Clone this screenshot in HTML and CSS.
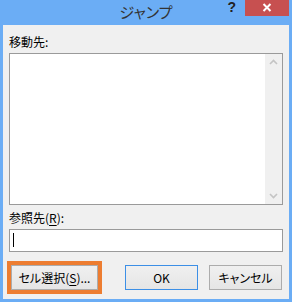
FILE: index.html
```html
<!DOCTYPE html>
<html lang="ja">
<head>
  <meta charset="UTF-8">
  <title>ジャンプ</title>
  <link rel="stylesheet" href="styles.css">
</head>
<body>
  <div class="window">
    <div class="titlebar">
      <div></div>
      <div class="title">ジャンプ</div>
      <div class="controls">
        <span class="help">?</span>
        <span class="close">
          <svg width="10" height="9" viewBox="0 0 10 9"><path d="M1.5 1 L8.5 8 M8.5 1 L1.5 8" stroke="#fff" stroke-width="2"/></svg>
        </span>
      </div>
    </div>
    <div class="panel">
      <div class="label">移動先:</div>
      <div class="listbox">
        <div class="scrollbar">
          <svg class="arrow" width="17" height="17" viewBox="0 0 17 17"><polyline points="5,10 8.5,6.5 12,10" fill="none" stroke="#c4c4c4" stroke-width="1.6"/></svg>
          <svg class="arrow" width="17" height="17" viewBox="0 0 17 17"><polyline points="5,7 8.5,10.5 12,7" fill="none" stroke="#c4c4c4" stroke-width="1.6"/></svg>
        </div>
      </div>
      <div class="label label-ref">参照先(<u>R</u>):</div>
      <div class="input"><i class="caret"></i></div>
      <div class="buttons">
        <button class="btn btn-cell">セル選択(<u>S</u>)...</button>
        <button class="btn btn-ok">OK</button>
        <button class="btn btn-cancel">キャンセル</button>
      </div>
    </div>
  </div>
</body>
</html>
```

FILE: styles.css
```css
html,body,div,span,button{margin:0;padding:0;}
body{
  width: 292px;
  height: 302px;
  overflow: hidden;
  font-family: "Noto Sans CJK JP", "Noto Sans", sans-serif;
  font-size: 12px;
  font-feature-settings: "palt";
  color: #000;
}
.window{
  width: 292px;
  height: 302px;
  background: #6badf5;
  display: flex;
  flex-direction: column;
}
.titlebar{
  height: 25px;
  flex: none;
  display: grid;
  grid-template-columns: 1fr auto 1fr;
}
.title{
  font-size: 15px;
  line-height: 24px;
  color: #333;
}
.controls{
  justify-self: end;
  display: flex;
  align-items: flex-start;
}
.help{
  font-family: "Liberation Sans", sans-serif;
  font-weight: bold;
  font-size: 14px;
  line-height: 15px;
  color: #222;
  margin-right: 9px;
}
.close{
  width: 44px;
  height: 16px;
  margin-right: 3px;
  background: #c75050;
  display: flex;
  justify-content: center;
  align-items: center;
}
.close svg{
  margin-top: -2px;
}
.panel{
  flex: 1;
  margin: 0 3px 3px;
  padding: 0 6px;
  background: #f0f0f0;
  display: flex;
  flex-direction: column;
}
.label{
  line-height: 20px;
  padding: 7px 0 1px;
}
.label-ref{
  padding: 3px 0 1px;
}
.label u{
  text-decoration-thickness: 1px;
  text-underline-offset: 2px;
}
.listbox{
  height: 152px;
  box-sizing: border-box;
  border: 1px solid #9a9a9a;
  background: #fff;
  display: flex;
  justify-content: flex-end;
}
.scrollbar{
  width: 17px;
  background: #f0f0f0;
  display: flex;
  flex-direction: column;
  justify-content: space-between;
}
.arrow{
  display: block;
}
.input{
  height: 23px;
  box-sizing: border-box;
  border: 1px solid #9a9a9a;
  background: #fff;
  padding: 3px 0 0 3px;
}
.caret{
  display: block;
  width: 1px;
  height: 14px;
  background: #000;
}
.buttons{
  margin-top: 13px;
  display: flex;
}
.btn{
  height: 25px;
  width: 73px;
  box-sizing: border-box;
  border: 1px solid #acacac;
  background: linear-gradient(#f0f0f0, #e5e5e5);
  font-family: "Noto Sans CJK JP", "Noto Sans", sans-serif;
  font-size: 12px;
  font-feature-settings: "palt";
  color: #000;
  line-height: 20px;
  text-align: center;
}
.btn u{
  text-underline-offset: 2px;
}
.btn-cell{
  width: 87px;
  margin-left: 2px;
  outline: 4px solid #ed7d31;
}
.btn-ok{
  margin-left: 27px;
  border-color: #3c8fe6;
}
.btn-cancel{
  margin-left: 11px;
}
```
